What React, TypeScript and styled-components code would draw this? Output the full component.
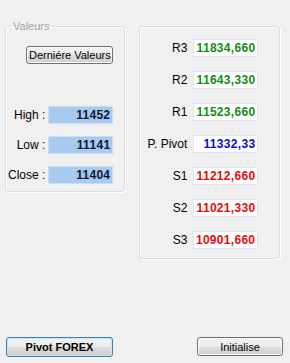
import styled, { createGlobalStyle } from 'styled-components';

const GlobalStyle = createGlobalStyle`
  html, body {
    margin: 0;
    padding: 0;
    background: #f0f0f0;
  }
  body {
    font-family: "Liberation Sans", Arial, sans-serif;
    font-size: 11px;
    color: #000;
  }
`;

const Window = styled.div`
  width: 290px;
  height: 363px;
  box-sizing: border-box;
  display: flex;
  flex-direction: column;
  background: #f0f0f0;
`;

const TopRow = styled.div`
  display: flex;
  align-items: flex-start;
  padding: 20px 0 0 5px;
  gap: 14px;
`;

const GroupBox = styled.fieldset`
  margin: 0;
  width: 116px;
  box-sizing: border-box;
  padding: 0 11px 7px 2px;
  border: 1px solid #d5dfe5;
  border-radius: 3px;
  box-shadow: inset 1px 1px 0 #fff, 1px 1px 0 #fff;
  display: flex;
  flex-direction: column;
`;

const Legend = styled.legend`
  color: #a3a3a3;
  font-size: 11px;
  line-height: 13px;
  padding: 0 2px;
  margin-left: 3px;
`;

const Panel = styled.div`
  margin-top: 6px;
  width: 141px;
  height: 233px;
  box-sizing: border-box;
  padding: 12px 21px 8px 0;
  border: 1px solid #d5dfe5;
  border-radius: 3px;
  box-shadow: inset 1px 1px 0 #fff, 1px 1px 0 #fff;
  display: flex;
  flex-direction: column;
  gap: 14px;
`;

const Button = styled.button<{ $default?: boolean; $w: number }>`
  width: ${p => p.$w}px;
  height: ${p => (p.$default ? 20 : 19)}px;
  box-sizing: border-box;
  padding: 0;
  font-family: "Liberation Sans", Arial, sans-serif;
  font-size: 11px;
  font-weight: ${p => (p.$default ? 700 : 400)};
  color: #000;
  border: 1px solid ${p => (p.$default ? '#3c7fb1' : '#707070')};
  border-radius: 3px;
  background: linear-gradient(to bottom, #f2f2f2 0%, #ebebeb 50%, #dddddd 51%, #cfcfcf 100%);
  box-shadow: inset 0 0 0 1px ${p => (p.$default ? '#c6e6f7' : '#fcfcfc')};
  cursor: default;
`;

const TopButton = styled(Button)`
  align-self: flex-end;
  margin-top: 13px;
  height: 18px;
`;

const ValueList = styled.div`
  display: flex;
  flex-direction: column;
  gap: 12px;
  margin-top: 42px;
`;

const Row = styled.div`
  display: flex;
  align-items: center;
  justify-content: flex-end;
`;

const Label = styled.span<{ $gap: number }>`
  margin-right: ${p => p.$gap}px;
  font-size: 12px;
  white-space: nowrap;
`;

const Field = styled.div<{ $color: string; $selected?: boolean }>`
  width: 65px;
  height: 18px;
  box-sizing: border-box;
  padding-right: 2px;
  display: flex;
  align-items: center;
  justify-content: flex-end;
  font-size: 12px;
  font-weight: 700;
  letter-spacing: 0.3px;
  color: ${p => p.$color};
  background: ${p => (p.$selected ? '#a6caf0' : '#ffffff')};
  border: 1px solid ${p => (p.$selected ? '#d3dbe3' : '#e2e3ea')};
`;

const Spacer = styled.div`
  flex: 1;
`;

const ButtonRow = styled.div`
  display: flex;
  justify-content: space-between;
  padding: 0 7px 6px 6px;
`;

const left = [
  { label: 'High :', value: '11452' },
  { label: 'Low :', value: '11141' },
  { label: 'Close :', value: '11404' },
];

const GREEN = '#138a13';
const BLUE = '#0a0ad0';
const RED = '#e80a0a';

const pivots = [
  { label: 'R3', value: '11834,660', color: GREEN },
  { label: 'R2', value: '11643,330', color: GREEN },
  { label: 'R1', value: '11523,660', color: GREEN },
  { label: 'P. Pivot', value: '11332,33', color: BLUE },
  { label: 'S1', value: '11212,660', color: RED },
  { label: 'S2', value: '11021,330', color: RED },
  { label: 'S3', value: '10901,660', color: RED },
];

export default function App() {
  return (
    <Window>
      <GlobalStyle />
      <TopRow>
        <GroupBox>
          <Legend>Valeurs</Legend>
          <TopButton $w={87}>Derniére Valeurs</TopButton>
          <ValueList>
            {left.map(r => (
              <Row key={r.label}>
                <Label $gap={3}>{r.label}</Label>
                <Field $color="#0c1633" $selected>{r.value}</Field>
              </Row>
            ))}
          </ValueList>
        </GroupBox>
        <Panel>
          {pivots.map(r => (
            <Row key={r.label}>
              <Label $gap={6}>{r.label}</Label>
              <Field $color={r.color}>{r.value}</Field>
            </Row>
          ))}
        </Panel>
      </TopRow>
      <Spacer />
      <ButtonRow>
        <Button $default $w={107}>Pivot FOREX</Button>
        <Button $w={86}>Initialise</Button>
      </ButtonRow>
    </Window>
  );
}
